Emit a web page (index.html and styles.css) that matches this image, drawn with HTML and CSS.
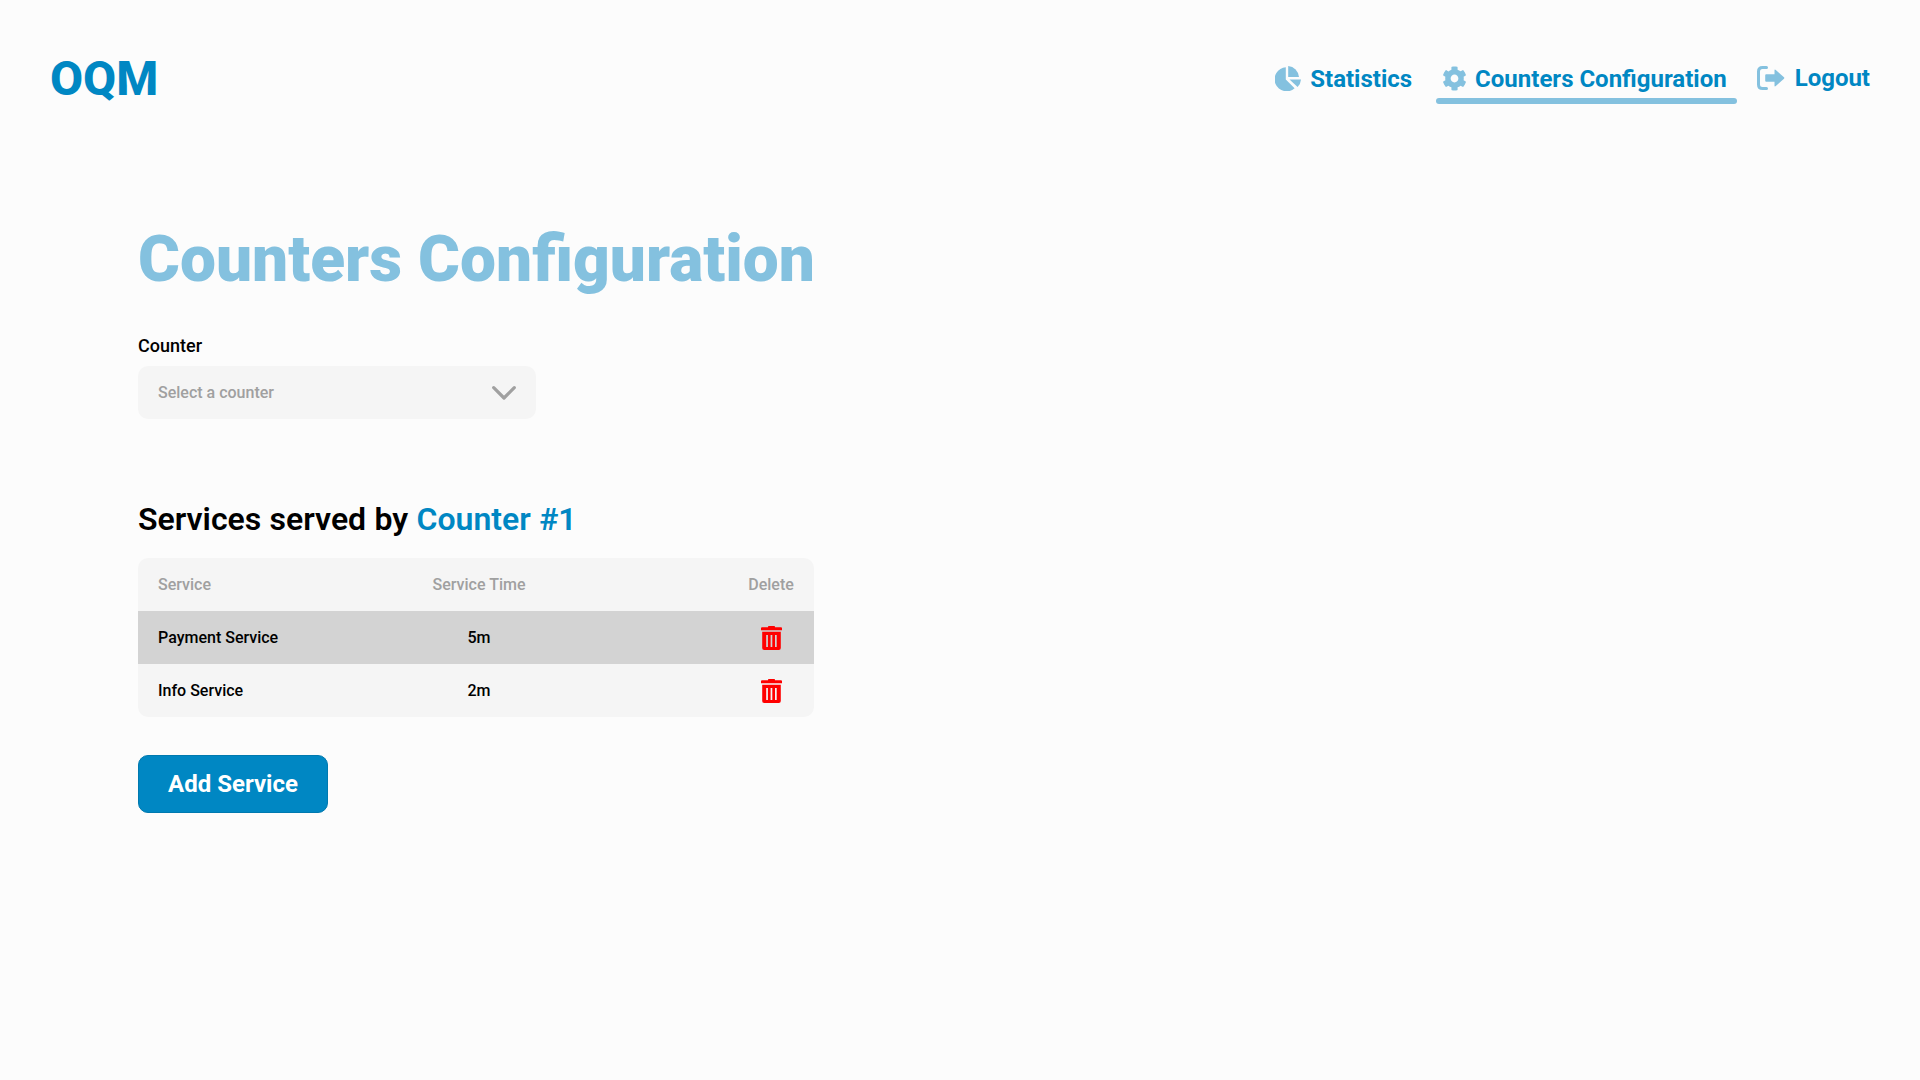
FILE: index.html
```html
<!DOCTYPE html>
<html lang="en">
<head>
<meta charset="utf-8">
<title>Counters Configuration</title>
<link rel="stylesheet" href="styles.css">
</head>
<body>
<header class="header">
  <a class="logo">OQM</a>
  <nav class="nav">
    <a class="nav-link nav-stats">
      <svg class="icon-pie" viewBox="0 0 26 25" fill="currentColor"><path d="M10.8 1.3V13.5L19.6 22.2A12 12 0 1 1 10.8 1.3Z"/><path d="M13.2 0A12 12 0 0 1 24 11H13.2Z"/><path d="M14.5 13.4H26Q25.6 17.8 22.6 21.1Z"/></svg>
      <span>Statistics</span>
    </a>
    <a class="nav-link nav-config active">
      <svg class="icon-gear" viewBox="18 0 476 512" preserveAspectRatio="none" fill="currentColor"><path d="M487.4 315.7l-42.6-24.6c4.3-23.2 4.300-47 0-70.200l42.600-24.600c4.900-2.800 7.100-8.600 5.500-14-11.100-35.600-30-67.800-54.700-94.600-3.800-4.100-10-5.100-14.800-2.300L380.800 110c-17.900-15.400-38.500-27.300-60.800-35.100V25.800c0-5.600-3.900-10.500-9.400-11.700-36.700-8.200-74.300-7.800-109.200 0-5.500 1.200-9.400 6.100-9.400 11.700V75c-22.200 7.900-42.800 19.800-60.800 35.100L88.700 85.500c-4.900-2.800-11-1.900-14.800 2.300-24.700 26.700-43.600 58.900-54.700 94.600-1.700 5.400.6 11.200 5.500 14L67.300 221c-4.300 23.200-4.300 47 0 70.200l-42.600 24.600c-4.900 2.800-7.100 8.600-5.500 14 11.100 35.600 30 67.800 54.700 94.600 3.800 4.100 10 5.100 14.800 2.300l42.600-24.600c17.900 15.400 38.500 27.300 60.800 35.100v49.200c0 5.600 3.900 10.500 9.400 11.700 36.700 8.200 74.300 7.800 109.200 0 5.500-1.200 9.400-6.100 9.400-11.700v-49.200c22.200-7.900 42.800-19.800 60.800-35.100l42.600 24.600c4.900 2.800 11 1.900 14.800-2.300 24.700-26.700 43.600-58.900 54.700-94.600 1.500-5.500-.7-11.300-5.600-14.100zM256 336c-44.100 0-80-35.900-80-80s35.900-80 80-80 80 35.900 80 80-35.900 80-80 80z"/></svg>
      <span>Counters Configuration</span>
    </a>
    <a class="nav-link nav-logout">
      <svg class="icon-out" viewBox="0 0 28 24"><path d="M9.500 1.500H5.500Q1.500 1.500 1.500 5.500V18.500Q1.500 22.500 5.500 22.500H9.500" fill="none" stroke="currentColor" stroke-width="3" stroke-linecap="round"/><path d="M9.200 8.200H17.500V4.500Q17.500 3 18.800 4L27 11.300Q27.600 12 27 12.700L18.800 20Q17.500 21 17.500 19.500V15.800H9.200Q8.200 15.800 8.200 14.800V9.200Q8.200 8.200 9.200 8.200Z" fill="currentColor"/></svg>
      <span>Logout</span>
    </a>
  </nav>
</header>
<main class="main">
  <h1 class="title">Counters Configuration</h1>
  <div class="label">Counter</div>
  <div class="select">
    <span>Select a counter</span>
    <svg class="chevron" viewBox="0 0 24 14" fill="none" stroke="currentColor" stroke-width="3.200" stroke-linecap="round" stroke-linejoin="round"><path d="M1.700 1.700L12 12L22.300 1.700"/></svg>
  </div>
  <h2 class="subtitle">Services served by <span class="accent">Counter #1</span></h2>
  <div class="table">
    <div class="row head"><span>Service</span><span class="time">Service Time</span><span class="delete">Delete</span></div>
    <div class="row selected"><span>Payment Service</span><span class="time">5m</span>
      <span class="delete"><svg class="trash" viewBox="0 0 21 24" fill="currentColor"><path d="M1 1.200H7V.8Q7 0 7.800 0H13.200Q14 0 14 .8V1.200H20Q21 1.200 21 2.200V4.200H0V2.200Q0 1.200 1 1.200Z"/><path fill-rule="evenodd" d="M1.200 5.800H19.800V22Q19.800 24 17.800 24H3.200Q1.200 24 1.200 22ZM5.200 9V21H6.900V9ZM9.600 9V21H11.300V9ZM14 9V21H15.700V9Z"/></svg></span></div>
    <div class="row"><span>Info Service</span><span class="time">2m</span>
      <span class="delete"><svg class="trash" viewBox="0 0 21 24" fill="currentColor"><path d="M1 1.200H7V.8Q7 0 7.800 0H13.200Q14 0 14 .8V1.200H20Q21 1.200 21 2.200V4.200H0V2.200Q0 1.200 1 1.200Z"/><path fill-rule="evenodd" d="M1.200 5.800H19.800V22Q19.800 24 17.800 24H3.200Q1.200 24 1.200 22ZM5.200 9V21H6.900V9ZM9.600 9V21H11.300V9ZM14 9V21H15.700V9Z"/></svg></span></div>
  </div>
  <button class="add">Add Service</button>
</main>
</body>
</html>
```
FILE: styles.css
```css
* { box-sizing: border-box; }
body { margin: 0; min-height: 1080px; background: #fcfcfc; color: #000; font-family: Roboto, sans-serif; font-weight: 500; }
svg { display: block; flex: none; }
.header { display: flex; justify-content: space-between; height: 104px; padding: 51px 50px 0; }
.logo { font-size: 48px; line-height: 56px; font-weight: 800; color: #0087c3; }
.nav { display: flex; align-items: flex-start; padding-top: 9px; }
.nav-link { display: flex; align-items: center; height: 38px; font-size: 24px; line-height: 28px; font-weight: 700; color: #0087c3; white-space: nowrap; }
.nav-link svg { color: #84c1df; }
.nav-config { position: relative; margin-left: 24px; padding: 0 10px 0 7px; }
.nav-config::after { content: ""; position: absolute; left: 0; right: 0; top: 38px; height: 6px; border-radius: 3px; background: #84c1df; }
.nav-logout { margin-left: 20px; height: 36px; }
.icon-pie { width: 26px; height: 25px; margin: -2px 9px 0 0; }
.icon-gear { width: 23px; height: 25px; margin: -1px 9px 0 0; }
.icon-out { width: 28px; height: 24px; margin-right: 10px; }
.main { padding: 118px 0 0 138px; }
.title { margin: 0; font-size: 64px; line-height: 75px; font-weight: 900; color: #84c1df; }
.label { margin-top: 38px; font-size: 18px; line-height: 21px; }
.select { display: flex; align-items: center; justify-content: space-between; width: 398px; height: 53px; margin-top: 10px; padding: 0 20px; background: #f5f5f5; border-radius: 10px; color: #a0a0a0; font-size: 16px; }
.chevron { width: 24px; height: 14px; }
.subtitle { margin: 81px 0 0; font-size: 32px; line-height: 38px; font-weight: 600; word-spacing: 0.4px; }
.accent { color: #0087c3; }
.table { width: 676px; margin-top: 20px; overflow: hidden; border-radius: 10px; background: #f5f5f5; }
.row { display: grid; grid-template-columns: 220px 202px 1fr 86px; align-items: center; height: 53px; padding-left: 20px; font-size: 16px; }
.head { color: #a0a0a0; }
.selected { background: #d3d3d3; }
.time { text-align: center; }
.delete { grid-column: 4; display: flex; justify-content: center; }
.trash { width: 21px; height: 24px; color: #f00; }
.add { width: 190px; height: 58px; margin-top: 38px; padding: 0; border: 1px solid #0079af; border-radius: 10px; background: #0087c3; color: #fff; font: 700 24px Roboto, sans-serif; }
```
